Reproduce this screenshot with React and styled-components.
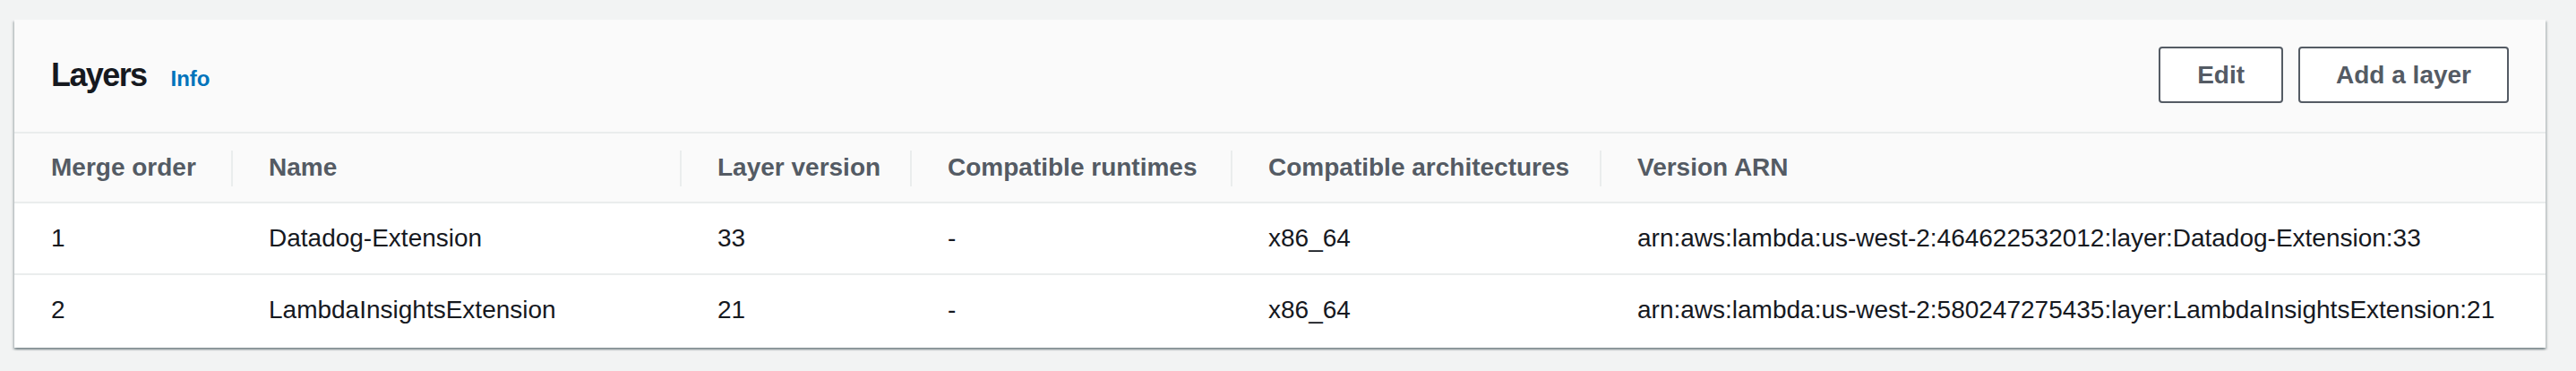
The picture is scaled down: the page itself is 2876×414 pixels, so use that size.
import React from "react";
import styled, { createGlobalStyle } from "styled-components";

const GlobalStyle = createGlobalStyle`
  * {
    box-sizing: border-box;
  }
  body {
    margin: 0;
    background: #f2f3f3;
    font-family: "Liberation Sans", Arial, sans-serif;
    color: #16191f;
  }
`;

const Page = styled.div`
  padding: 22px 34px 26px 16px;
`;

const Card = styled.section`
  background: #ffffff;
  box-shadow: 0 2px 2px 0 rgba(0, 28, 36, 0.3),
    2px 2px 2px 0 rgba(0, 28, 36, 0.15), -2px 2px 2px 0 rgba(0, 28, 36, 0.15);
`;

const Header = styled.header`
  display: flex;
  align-items: center;
  justify-content: space-between;
  padding: 30px 41px 32px 41px;
  background: #fafafa;
  border-bottom: 2px solid #eaeded;
`;

const TitleGroup = styled.div`
  display: flex;
  align-items: baseline;
  gap: 27px;
`;

const Title = styled.h2`
  margin: 0;
  font-size: 36px;
  line-height: 44px;
  font-weight: 700;
  letter-spacing: -1.6px;
  color: #16191f;
`;

const InfoLink = styled.a`
  font-size: 24px;
  font-weight: 700;
  color: #0073bb;
  text-decoration: none;
`;

const Actions = styled.div`
  display: flex;
  gap: 17px;
`;

const Button = styled.button`
  font-family: inherit;
  font-size: 28px;
  font-weight: 700;
  line-height: 43px;
  padding: 8px ${(p) => p.$pad}px;
  color: #545b64;
  background: #ffffff;
  border: 2px solid #545b64;
  border-radius: 4px;
  cursor: pointer;
`;

const Table = styled.table`
  width: 100%;
  table-layout: fixed;
  border-collapse: separate;
  border-spacing: 0;
  font-size: 28px;
  line-height: 44px;
`;

const Th = styled.th`
  position: relative;
  width: ${(p) => (p.$width ? `${p.$width}px` : "auto")};
  padding: 16px 0 16px 42px;
  text-align: left;
  font-weight: 700;
  color: #545b64;
  background: #fafafa;
  border-bottom: 2px solid #eaeded;
  white-space: nowrap;

  &:first-child {
    padding-left: 41px;
  }

  &:not(:first-child)::before {
    content: "";
    position: absolute;
    left: 0;
    top: 19px;
    width: 2px;
    height: 40px;
    background: #eaeded;
  }
`;

const Td = styled.td`
  padding: 17px 0 17px 42px;
  color: #16191f;
  border-bottom: 2px solid #eaeded;
  white-space: nowrap;

  &:first-child {
    padding-left: 41px;
  }
`;

const Row = styled.tr`
  &:last-child ${Td} {
    border-bottom: none;
    padding-bottom: 20px;
  }
`;

const columns = [
  { label: "Merge order", width: 242 },
  { label: "Name", width: 501 },
  { label: "Layer version", width: 257 },
  { label: "Compatible runtimes", width: 358 },
  { label: "Compatible architectures", width: 412 },
  { label: "Version ARN" },
];

const layers = [
  {
    order: 1,
    name: "Datadog-Extension",
    version: 33,
    runtimes: "-",
    arch: "x86_64",
    arn: "arn:aws:lambda:us-west-2:464622532012:layer:Datadog-Extension:33",
  },
  {
    order: 2,
    name: "LambdaInsightsExtension",
    version: 21,
    runtimes: "-",
    arch: "x86_64",
    arn: "arn:aws:lambda:us-west-2:580247275435:layer:LambdaInsightsExtension:21",
  },
];

export default function App() {
  return (
    <>
      <GlobalStyle />
      <Page>
        <Card>
          <Header>
            <TitleGroup>
              <Title>Layers</Title>
              <InfoLink href="#">Info</InfoLink>
            </TitleGroup>
            <Actions>
              <Button $pad={41}>Edit</Button>
              <Button $pad={40}>Add a layer</Button>
            </Actions>
          </Header>
          <Table>
            <thead>
              <tr>
                {columns.map((c) => (
                  <Th key={c.label} $width={c.width}>
                    {c.label}
                  </Th>
                ))}
              </tr>
            </thead>
            <tbody>
              {layers.map((l) => (
                <Row key={l.order}>
                  <Td>{l.order}</Td>
                  <Td>{l.name}</Td>
                  <Td>{l.version}</Td>
                  <Td>{l.runtimes}</Td>
                  <Td>{l.arch}</Td>
                  <Td>{l.arn}</Td>
                </Row>
              ))}
            </tbody>
          </Table>
        </Card>
      </Page>
    </>
  );
}
